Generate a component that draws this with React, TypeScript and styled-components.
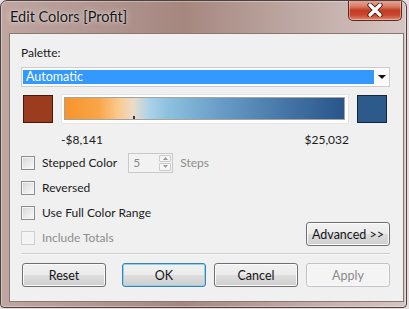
import React from "react";
import styled, { createGlobalStyle, css } from "styled-components";

const GlobalStyle = createGlobalStyle`
  html, body {
    margin: 0;
    padding: 0;
    background: #e4dfde;
  }
  body {
    font-family: Lato, "Open Sans", sans-serif;
  }
`;

const Window = styled.div`
  width: 407px;
  height: 308px;
  box-sizing: border-box;
  border: 1px solid #4d403e;
  border-radius: 7px 7px 4px 4px;
  background: linear-gradient(
    90deg,
    #bfa6a1 0%,
    #b39893 20%,
    #a5877f 45%,
    #bca5a0 70%,
    #d6c6c3 100%
  );
  box-shadow: inset 0 0 0 1px rgba(255, 255, 255, 0.35);
  display: flex;
  flex-direction: column;
  overflow: hidden;
`;

const TitleBar = styled.div`
  height: 32px;
  flex: none;
  display: flex;
  align-items: flex-start;
  justify-content: space-between;
  padding: 0 4px 0 9px;
`;

const TitleText = styled.span`
  margin-top: 7px;
  font-size: 14.5px;
  line-height: 18px;
  color: #161616;
  text-shadow: 0 0 6px rgba(255, 255, 255, 0.75), 0 0 2px rgba(255, 255, 255, 0.6);
`;

const CloseButton = styled.div`
  width: 54px;
  height: 21px;
  margin-top: -1px;
  box-sizing: border-box;
  border: 1px solid #5a2a22;
  border-top: none;
  border-radius: 0 0 5px 5px;
  background: linear-gradient(
    180deg,
    #e7ab9c 0%,
    #d9806b 30%,
    #c23c24 52%,
    #c9462d 75%,
    #e08a70 100%
  );
  box-shadow: inset 0 0 0 1px rgba(255, 220, 210, 0.45);
  display: flex;
  align-items: center;
  justify-content: center;
`;

const Body = styled.div`
  flex: 1;
  display: flex;
  padding: 0 4px 5px 8px;
  min-height: 0;
`;

const Client = styled.div`
  flex: 1;
  box-sizing: border-box;
  border: 1px solid #8a7773;
  background: #f0f0f0;
  padding: 11px 13px 14px 11px;
  display: flex;
  flex-direction: column;
  font-size: 12px;
  line-height: 15px;
  color: #1b1b1b;
`;

const Label = styled.div`
  height: 15px;
`;

const Combo = styled.div`
  margin-top: 7px;
  height: 20px;
  box-sizing: border-box;
  border: 1px solid #cdcdcd;
  background: #fbfbfb;
  display: flex;
  align-items: stretch;
  padding: 2px 0 2px 1px;
`;

const ComboValue = styled.div`
  flex: 1;
  background: #3399ff;
  color: #ffffff;
  padding-left: 3px;
  font-size: 12.5px;
  line-height: 14px;
`;

const ComboArrow = styled.div`
  width: 15px;
  display: flex;
  align-items: center;
  justify-content: center;
`;

const ColorRow = styled.div`
  margin-top: 7px;
  height: 30px;
  display: flex;
  align-items: center;
  gap: 8px;
  padding-left: 2px;
`;

const Swatch = styled.div<{ $color: string; $edge: string }>`
  width: 30px;
  height: 28px;
  box-sizing: border-box;
  border: 1px solid ${({ $edge }) => $edge};
  background: ${({ $color }) => $color};
`;

const RampFrame = styled.div`
  width: 288px;
  height: 30px;
  box-sizing: border-box;
  background: #ffffff;
  border: 1px solid #e6e6e6;
  padding: 2px 3px 3px 2px;
  display: flex;
`;

const Ramp = styled.div`
  flex: 1;
  position: relative;
  border: 1px solid #a7a39c;
  background: linear-gradient(
    90deg,
    #f7942c 0%,
    #f9a548 12%,
    #fcc88d 19%,
    #e9dccb 24.5%,
    #acd3e8 30%,
    #8cc1de 37%,
    #6a9ec9 55%,
    #4677a8 78%,
    #29558a 100%
  );
`;

const ZeroTick = styled.span`
  position: absolute;
  bottom: 0;
  width: 2px;
  height: 3px;
  background: #3b3b3b;
`;

const RangeLabels = styled.div`
  margin-top: 8px;
  height: 15px;
  width: 288px;
  margin-left: 40px;
  display: flex;
  justify-content: space-between;
`;

const Options = styled.div`
  margin-top: 3px;
  display: flex;
  align-items: flex-end;
`;

const OptionList = styled.div`
  flex: 1;
  display: flex;
  flex-direction: column;
`;

const OptionRow = styled.div`
  height: 25px;
  display: flex;
  align-items: center;
  gap: 7px;
`;

const CheckBox = styled.span<{ $disabled?: boolean }>`
  width: 14px;
  height: 14px;
  box-sizing: border-box;
  border: 1px solid ${({ $disabled }) => ($disabled ? "#cdcdcd" : "#8e8f8f")};
  background: ${({ $disabled }) =>
    $disabled
      ? "#f4f4f4"
      : "linear-gradient(135deg, #d5d5d5 0%, #ececec 60%, #fafafa 100%)"};
  box-shadow: inset 0 0 0 1px ${({ $disabled }) => ($disabled ? "#f6f6f6" : "#f3f3f3")};
`;

const OptionText = styled.span<{ $muted?: boolean }>`
  color: ${({ $muted }) => ($muted ? "#8d8d8d" : "#1b1b1b")};
`;

const Spinner = styled.div`
  margin-left: 4px;
  width: 45px;
  height: 20px;
  box-sizing: border-box;
  border: 1px solid #c9c9c9;
  background: #f2f2f2;
  display: flex;
  align-items: stretch;
  padding: 1px;
`;

const SpinValue = styled.span`
  flex: 1;
  color: #8a8a8a;
  padding-left: 3px;
  line-height: 16px;
`;

const SpinButtons = styled.div`
  width: 12px;
  display: flex;
  flex-direction: column;
  gap: 1px;
`;

const SpinButton = styled.div`
  flex: 1;
  box-sizing: border-box;
  border: 1px solid #cccccc;
  border-radius: 1px;
  background: #f5f5f5;
  display: flex;
  align-items: center;
  justify-content: center;
`;

const buttonBase = css`
  width: 84px;
  height: 24px;
  box-sizing: border-box;
  border-radius: 3px;
  font-family: Lato, "Open Sans", sans-serif;
  font-size: 12.5px;
  padding: 0;
  cursor: default;
`;

const Button = styled.button<{ $variant?: "default" | "primary" | "disabled" }>`
  ${buttonBase};
  color: ${({ $variant }) => ($variant === "disabled" ? "#8a8a8a" : "#151515")};
  border: 1px solid
    ${({ $variant }) =>
      $variant === "primary"
        ? "#3c7fb1"
        : $variant === "disabled"
          ? "#c2c5c7"
          : "#707070"};
  background: ${({ $variant }) =>
    $variant === "disabled"
      ? "#f4f4f4"
      : "linear-gradient(180deg, #f2f2f2 0%, #ebebeb 48%, #dddddd 52%, #cfcfcf 100%)"};
  box-shadow: inset 0 0 0 1px
    ${({ $variant }) =>
      $variant === "primary"
        ? "#8ad3f3"
        : $variant === "disabled"
          ? "#f9f9f9"
          : "#fbfbfb"};
`;

const AdvancedButton = styled(Button)`
  margin-bottom: 4px;
`;

const Separator = styled.div`
  margin-top: 3px;
  height: 1px;
  background: #cdcdcd;
  box-shadow: 0 1px 0 #fbfbfb;
`;

const ButtonBar = styled.div`
  margin-top: 9px;
  display: flex;
  align-items: center;
  gap: 8px;
  padding-left: 1px;
`;

const Spacer = styled.div`
  flex: 1;
`;

const CloseGlyph = () => (
  <svg width="18" height="14" viewBox="0 0 18 14">
    <path
      d="M4 2 L14 12 M14 2 L4 12"
      stroke="#4a1d16"
      strokeWidth="5.2"
      strokeLinecap="round"
      fill="none"
    />
    <path
      d="M4 2 L14 12 M14 2 L4 12"
      stroke="#ffffff"
      strokeWidth="3.2"
      strokeLinecap="round"
      fill="none"
    />
  </svg>
);

const Triangle = ({ dir, color, w, h }: { dir: "up" | "down"; color: string; w: number; h: number }) => (
  <svg width={w} height={h} viewBox={`0 0 ${w} ${h}`}>
    <polygon
      points={dir === "down" ? `0,0 ${w},0 ${w / 2},${h}` : `0,${h} ${w},${h} ${w / 2},0`}
      fill={color}
    />
  </svg>
);

const MIN = -8141;
const MAX = 25032;

export default function App() {
  const zero = ((0 - MIN) / (MAX - MIN)) * 100;

  return (
    <>
      <GlobalStyle />
      <Window>
        <TitleBar>
          <TitleText>Edit Colors [Profit]</TitleText>
          <CloseButton>
            <CloseGlyph />
          </CloseButton>
        </TitleBar>
        <Body>
          <Client>
            <Label>Palette:</Label>
            <Combo>
              <ComboValue>Automatic</ComboValue>
              <ComboArrow>
                <Triangle dir="down" color="#111" w={8} h={4} />
              </ComboArrow>
            </Combo>

            <ColorRow>
              <Swatch $color="#9c3c1f" $edge="#3e1a0f" />
              <RampFrame>
                <Ramp>
                  <ZeroTick style={{ left: `${zero}%` }} />
                </Ramp>
              </RampFrame>
              <Swatch $color="#2b5a8b" $edge="#142539" />
            </ColorRow>
            <RangeLabels>
              <span>-$8,141</span>
              <span>$25,032</span>
            </RangeLabels>

            <Options>
              <OptionList>
                <OptionRow>
                  <CheckBox />
                  <OptionText>Stepped Color</OptionText>
                  <Spinner>
                    <SpinValue>5</SpinValue>
                    <SpinButtons>
                      <SpinButton>
                        <Triangle dir="up" color="#9a9a9a" w={5} h={3} />
                      </SpinButton>
                      <SpinButton>
                        <Triangle dir="down" color="#9a9a9a" w={5} h={3} />
                      </SpinButton>
                    </SpinButtons>
                  </Spinner>
                  <OptionText $muted>Steps</OptionText>
                </OptionRow>
                <OptionRow>
                  <CheckBox />
                  <OptionText>Reversed</OptionText>
                </OptionRow>
                <OptionRow>
                  <CheckBox />
                  <OptionText>Use Full Color Range</OptionText>
                </OptionRow>
                <OptionRow>
                  <CheckBox $disabled />
                  <OptionText $muted>Include Totals</OptionText>
                </OptionRow>
              </OptionList>
              <AdvancedButton>Advanced &gt;&gt;</AdvancedButton>
            </Options>

            <Separator />

            <ButtonBar>
              <Button>Reset</Button>
              <Spacer />
              <Button $variant="primary">OK</Button>
              <Button>Cancel</Button>
              <Button $variant="disabled">Apply</Button>
            </ButtonBar>
          </Client>
        </Body>
      </Window>
    </>
  );
}
